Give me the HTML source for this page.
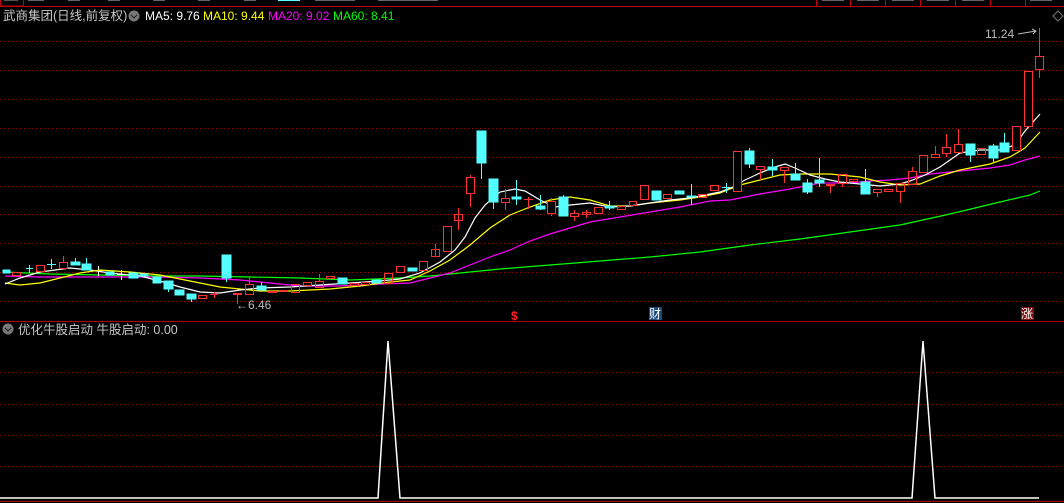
<!DOCTYPE html>
<html><head><meta charset="utf-8"><style>
html,body{margin:0;padding:0;background:#000;width:1064px;height:503px;overflow:hidden}
svg{display:block}
text{font-family:"Liberation Sans","Noto Sans CJK SC",sans-serif}
</style></head><body>
<svg width="1064" height="503" viewBox="0 0 1064 503" xmlns="http://www.w3.org/2000/svg" shape-rendering="crispEdges">
<rect width="1064" height="503" fill="#000"/>
<rect x="0.5" y="-2" width="23" height="8" fill="#000" stroke="#c00000"/>
<rect x="4" y="0" width="14" height="1" fill="#555"/>
<line x1="0" y1="6.5" x2="1064" y2="6.5" stroke="#c00000"/>
<g fill="#666">
<rect x="28" y="0" width="16" height="1"/><rect x="68" y="0" width="12" height="1"/><rect x="108" y="0" width="12" height="1"/>
<rect x="153" y="0" width="12" height="1"/><rect x="198" y="0" width="12" height="1"/><rect x="244" y="0" width="12" height="1"/>
<rect x="315" y="0" width="40" height="1"/><rect x="378" y="0" width="60" height="1"/>
<rect x="822" y="0" width="22" height="1"/><rect x="857" y="0" width="22" height="1"/><rect x="892" y="0" width="22" height="1"/><rect x="927" y="0" width="22" height="1"/><rect x="962" y="0" width="22" height="1"/><rect x="1030" y="0" width="22" height="1"/>
</g>
<rect x="278" y="0" width="22" height="1" fill="#5ff"/>
<g stroke="#c00000"><line x1="816.5" y1="0" x2="816.5" y2="6"/><line x1="850.5" y1="0" x2="850.5" y2="6"/><line x1="885.5" y1="0" x2="885.5" y2="6"/><line x1="920.5" y1="0" x2="920.5" y2="6"/><line x1="955.5" y1="0" x2="955.5" y2="6"/><line x1="990.5" y1="0" x2="990.5" y2="6"/><line x1="1025.5" y1="0" x2="1025.5" y2="6"/></g>
<text x="3" y="20" font-size="12.5" fill="#c8c8c8">武商集团(日线,前复权)</text>
<circle cx="134" cy="16" r="5.5" fill="#777"/><path d="M131 15l3 3 3-3" stroke="#222" fill="none" stroke-width="1.3"/>
<text x="145" y="20" font-size="12" fill="#fff">MA5: 9.76</text>
<text x="203" y="20" font-size="12" fill="#ffff00">MA10: 9.44</text>
<text x="268" y="20" font-size="12" fill="#ff00ff">MA20: 9.02</text>
<text x="333" y="20" font-size="12" fill="#00ff00">MA60: 8.41</text>
<path d="M1053 16l5-5 5 5-5 5z" stroke="#777" fill="none" shape-rendering="auto"/>
<g stroke="#a00000" stroke-dasharray="1 3">
<line x1="0" y1="41.5" x2="1064" y2="41.5"/><line x1="0" y1="70.5" x2="1064" y2="70.5"/><line x1="0" y1="99.5" x2="1064" y2="99.5"/><line x1="0" y1="128.5" x2="1064" y2="128.5"/><line x1="0" y1="157.5" x2="1064" y2="157.5"/><line x1="0" y1="186.5" x2="1064" y2="186.5"/><line x1="0" y1="214.5" x2="1064" y2="214.5"/><line x1="0" y1="243.5" x2="1064" y2="243.5"/><line x1="0" y1="272.5" x2="1064" y2="272.5"/><line x1="0" y1="301.5" x2="1064" y2="301.5"/>
<line x1="0" y1="372.5" x2="1064" y2="372.5"/><line x1="0" y1="404.5" x2="1064" y2="404.5"/><line x1="0" y1="435.5" x2="1064" y2="435.5"/><line x1="0" y1="466.5" x2="1064" y2="466.5"/>
</g>
<g fill="none" stroke-width="1.2" shape-rendering="auto">
<polyline stroke="#00ff00" points="5,272 50,274 100,275 150,276 200,276 250,277 300,278 350,280 400,278 430,276 460,273 500,269 550,265 600,261 650,257 700,252 750,245 800,239 850,232 900,225 950,214 1000,202 1030,195 1040,191"/>
<polyline stroke="#ff00ff" points="5,276 40,277 80,277 120,277 160,277 200,278 240,280 270,283 300,286 340,286 380,284 410,283 430,278 450,273 470,265 490,257 510,250 530,241 550,234 570,228 590,222 620,217 650,212 680,207 710,201 730,200 760,194 790,189 820,183 850,183 870,181 890,180 910,178 930,174 950,172 970,170 990,168 1010,165 1025,160 1040,156"/>
<polyline stroke="#ffff00" points="5,283 20,285 40,283 60,278 80,273 100,270 130,272 160,275 190,281 220,287 260,291 290,291 330,289 360,286 390,282 410,280 430,271 450,260 470,245 490,228 510,215 530,207 550,200 570,197 590,200 610,206 630,206 650,203 680,200 700,197 720,193 740,185 760,180 780,175 800,174 830,174 860,177 880,182 900,185 920,184 940,176 960,170 990,164 1010,157 1025,148 1040,132"/>
<polyline stroke="#ffffff" points="5,284 20,278 40,272 70,268 90,270 110,273 140,276 160,281 180,287 200,292 220,293 240,290 260,288 290,287 320,285 350,283 380,281 400,279 420,273 440,262 455,250 465,237 475,218 485,205 500,192 515,189 525,191 540,200 555,207 570,205 590,203 610,207 630,206 650,203 670,200 690,198 700,196 720,192 733,187 745,180 760,173 775,167 785,164 795,168 810,175 825,179 840,182 860,184 880,186 900,184 910,181 925,175 940,167 960,153 980,150 1000,150 1015,145 1025,131 1040,114"/>
</g>
<g>
<g fill="#54ffff" stroke="#54ffff">
<rect x="3" y="270" width="7" height="3"/>
<line x1="29.5" y1="265" x2="29.5" y2="273"/><line x1="26" y1="268.5" x2="33" y2="268.5"/>
<line x1="51.5" y1="259" x2="51.5" y2="269"/><line x1="47" y1="264.5" x2="56" y2="264.5"/>
<line x1="75.5" y1="258" x2="75.5" y2="262"/><rect x="71" y="262" width="9" height="3"/>
<line x1="86.5" y1="258" x2="86.5" y2="264"/><rect x="82" y="264" width="9" height="6"/>
<rect x="106" y="272" width="8" height="3"/>
<line x1="121.5" y1="270" x2="121.5" y2="280" stroke="#fff"/><line x1="117" y1="274.5" x2="126" y2="274.5" stroke="#fff"/>
<rect x="129" y="273" width="9" height="5"/>
<rect x="140" y="274" width="8" height="2"/>
<rect x="153" y="277" width="8" height="6"/>
<line x1="168.5" y1="289" x2="168.5" y2="292"/><rect x="164" y="281" width="9" height="8"/>
<rect x="175" y="290" width="9" height="5"/>
<line x1="191.5" y1="299" x2="191.5" y2="302"/><rect x="187" y="294" width="9" height="5"/>
<line x1="226.5" y1="278" x2="226.5" y2="282"/><rect x="222" y="255" width="9" height="23"/>
<line x1="261.5" y1="282" x2="261.5" y2="286"/><rect x="257" y="286" width="9" height="4"/>
<rect x="338" y="278" width="9" height="6"/>
<rect x="372" y="280" width="9" height="3"/>
<rect x="408" y="268" width="9" height="3"/>
<line x1="481.5" y1="131" x2="481.5" y2="179"/><rect x="477" y="131" width="9" height="32"/>
<line x1="493.5" y1="202" x2="493.5" y2="209"/><rect x="489" y="179" width="9" height="23"/>
<line x1="516.5" y1="180" x2="516.5" y2="205"/><rect x="512" y="197" width="9" height="2"/>
<line x1="540.5" y1="195" x2="540.5" y2="210"/><rect x="536" y="206" width="9" height="3"/>
<line x1="563.5" y1="195" x2="563.5" y2="197"/><rect x="559" y="197" width="9" height="19"/>
<line x1="609.5" y1="201" x2="609.5" y2="210"/><rect x="605" y="206" width="9" height="2"/>
<rect x="652" y="191" width="9" height="9"/>
<rect x="675" y="191" width="9" height="3"/>
<line x1="691.5" y1="184" x2="691.5" y2="205"/><rect x="687" y="196" width="9" height="1"/>
<line x1="726.5" y1="183" x2="726.5" y2="193"/><line x1="722" y1="187.5" x2="731" y2="187.5"/>
<line x1="749.5" y1="148" x2="749.5" y2="168"/><rect x="745" y="151" width="9" height="13"/>
<line x1="772.5" y1="159" x2="772.5" y2="176"/><rect x="768" y="167" width="9" height="3"/>
<line x1="795.5" y1="163" x2="795.5" y2="174"/><rect x="791" y="174" width="9" height="6"/>
<line x1="807.5" y1="179" x2="807.5" y2="194"/><rect x="803" y="183" width="9" height="9"/>
<line x1="819.5" y1="158" x2="819.5" y2="187"/><rect x="815" y="180" width="9" height="3"/>
<line x1="865.5" y1="169" x2="865.5" y2="182"/><rect x="861" y="182" width="9" height="12"/>
<line x1="970.5" y1="155" x2="970.5" y2="162"/><rect x="966" y="144" width="9" height="11"/>
<line x1="993.5" y1="144" x2="993.5" y2="163"/><rect x="989" y="146" width="9" height="12"/>
<line x1="1004.5" y1="133" x2="1004.5" y2="143"/><rect x="1000" y="143" width="9" height="9"/>
</g>
<g fill="none" stroke="#ff3232">
<rect x="12.5" y="272.5" width="8" height="3"/>
<rect x="36.5" y="265.5" width="8" height="6"/>
<line x1="63.5" y1="256" x2="63.5" y2="262"/><rect x="59.5" y="262.5" width="8" height="6"/>
<line x1="98.5" y1="266" x2="98.5" y2="276" stroke="#fff"/><line x1="94" y1="270.5" x2="103" y2="270.5" stroke="#ffff00"/>
<rect x="198.5" y="295.5" width="8" height="3"/>
<line x1="214.5" y1="292" x2="214.5" y2="298"/><line x1="210" y1="294.5" x2="218" y2="294.5"/>
<line x1="237.5" y1="295" x2="237.5" y2="304"/><rect x="233.5" y="293.5" width="8" height="1" fill="#ff3232"/>
<line x1="249.5" y1="277" x2="249.5" y2="284"/><rect x="245.5" y="284.5" width="8" height="10"/>
<rect x="268.5" y="291.5" width="8" height="1"/>
<rect x="279.5" y="290.5" width="8" height="1"/>
<rect x="291.5" y="284.5" width="8" height="8"/>
<rect x="303.5" y="282.5" width="8" height="3"/>
<line x1="319.5" y1="274" x2="319.5" y2="281"/><rect x="315.5" y="281.5" width="8" height="6"/>
<rect x="326.5" y="276.5" width="8" height="2"/>
<rect x="350.5" y="283.5" width="8" height="2"/>
<rect x="361.5" y="282.5" width="8" height="2"/>
<rect x="384.5" y="273.5" width="8" height="10"/>
<rect x="396.5" y="266.5" width="8" height="6"/>
<rect x="419.5" y="261.5" width="8" height="9"/>
<line x1="435.5" y1="244" x2="435.5" y2="257"/><rect x="431.5" y="249.5" width="8" height="7"/>
<rect x="443.5" y="226.5" width="8" height="25"/>
<line x1="458.5" y1="208" x2="458.5" y2="230"/><rect x="454.5" y="214.5" width="8" height="6"/>
<line x1="470.5" y1="175" x2="470.5" y2="207"/><rect x="466.5" y="177.5" width="8" height="16" fill="#000"/>
<line x1="505.5" y1="189" x2="505.5" y2="210"/><rect x="501.5" y="198.5" width="8" height="4" fill="#000"/>
<line x1="528.5" y1="197" x2="528.5" y2="209"/><line x1="524" y1="199.5" x2="533" y2="199.5"/>
<line x1="551.5" y1="198" x2="551.5" y2="216"/><rect x="547.5" y="201.5" width="8" height="12" fill="#000"/>
<line x1="574.5" y1="210" x2="574.5" y2="221"/><rect x="570.5" y="213.5" width="8" height="3" fill="#000"/>
<line x1="586.5" y1="210" x2="586.5" y2="218"/><rect x="582.5" y="212.5" width="8" height="2"/>
<rect x="594.5" y="207.5" width="8" height="6"/>
<rect x="617.5" y="206.5" width="8" height="3"/>
<rect x="629.5" y="201.5" width="7" height="4"/>
<rect x="640.5" y="185.5" width="8" height="14"/>
<rect x="663.5" y="194.5" width="8" height="4"/>
<rect x="698.5" y="194.5" width="8" height="3"/>
<rect x="710.5" y="185.5" width="8" height="5"/>
<rect x="733.5" y="151.5" width="8" height="40" fill="#000"/>
<line x1="760.5" y1="169" x2="760.5" y2="180"/><rect x="756.5" y="166.5" width="8" height="3"/>
<line x1="784.5" y1="170" x2="784.5" y2="183"/><rect x="780.5" y="167.5" width="8" height="3"/>
<line x1="830.5" y1="185" x2="830.5" y2="193"/><rect x="826.5" y="184.5" width="8" height="1"/>
<line x1="842.5" y1="183" x2="842.5" y2="187"/><rect x="838.5" y="174.5" width="8" height="9"/>
<rect x="849.5" y="179.5" width="8" height="2"/>
<line x1="877.5" y1="192" x2="877.5" y2="197"/><rect x="873.5" y="189.5" width="8" height="3"/>
<rect x="884.5" y="189.5" width="8" height="2"/>
<line x1="900.5" y1="191" x2="900.5" y2="203"/><rect x="896.5" y="183.5" width="8" height="8"/>
<line x1="912.5" y1="167" x2="912.5" y2="171"/><rect x="908.5" y="171.5" width="8" height="13"/>
<rect x="919.5" y="155.5" width="8" height="17"/>
<line x1="935.5" y1="146" x2="935.5" y2="154"/><rect x="931.5" y="154.5" width="8" height="3"/>
<line x1="946.5" y1="134" x2="946.5" y2="157"/><rect x="942.5" y="147.5" width="8" height="6" fill="#000"/>
<line x1="958.5" y1="129" x2="958.5" y2="144"/><rect x="954.5" y="144.5" width="8" height="8"/>
<rect x="977.5" y="148.5" width="8" height="6"/>
<rect x="1012.5" y="126.5" width="8" height="24" fill="#000"/>
<rect x="1024.5" y="71.5" width="8" height="55" fill="#000"/>
<line x1="1039.5" y1="28" x2="1039.5" y2="78"/><rect x="1035.5" y="56.5" width="8" height="13" fill="#000"/>
</g>
</g>
<text x="985" y="38" font-size="12" fill="#bbb">11.24</text>
<path d="M1018 34l18-3m-4-2 4 2-3 3" stroke="#bbb" fill="none" shape-rendering="auto"/>
<text x="236" y="309" font-size="12" fill="#bbb">←6.46</text>
<text x="511" y="320" font-size="12" font-weight="bold" fill="#ff2020">$</text>
<rect x="649" y="307" width="13" height="13" fill="#1a4a7a"/>
<text x="649" y="318" font-size="12" fill="#fff">财</text>
<rect x="1021" y="307" width="13" height="13" fill="#7a1010"/>
<text x="1021" y="318" font-size="12" fill="#fff">涨</text>
<line x1="0" y1="321.5" x2="1064" y2="321.5" stroke="#b00000"/>
<circle cx="8" cy="329" r="5.5" fill="#777"/><path d="M5 328l3 3 3-3" stroke="#222" fill="none" stroke-width="1.3"/>
<text x="18" y="334" font-size="12.5" fill="#c8c8c8">优化牛股启动 牛股启动: 0.00</text>
<polyline fill="none" stroke="#fff" stroke-width="1.5" points="0,498 378,498 388,341 400,498 912,498 923,341 935,498 1039,498" shape-rendering="auto"/>
<line x1="0" y1="501.5" x2="1064" y2="501.5" stroke="#b00000"/>
</svg>
</body></html>
